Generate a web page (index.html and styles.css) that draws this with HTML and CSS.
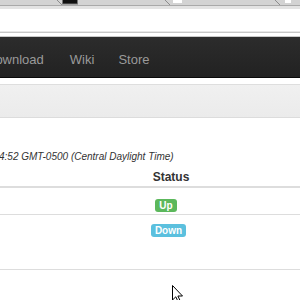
FILE: index.html
```html
<!DOCTYPE html>
<html lang="en">
  <head>
    <meta charset="UTF-8" />
    <meta name="viewport" content="width=device-width, initial-scale=1.0" />
    <title>Server Status</title>
    <link rel="stylesheet" href="styles.css">
  </head>
  <body>
    <!-- browser chrome -->
    <div class="tabstrip">
      <svg width="300" height="5" viewBox="0 0 300 5">
        <path d="M57 0 L62 5 M165 0 L170 5 M275 0 L280 5" stroke="#8c8c8c" stroke-width="1" fill="none" />
        <rect x="62.5" y="-1" width="15" height="5" fill="#111" stroke="#777" />
        <rect x="173" y="0" width="9" height="3" fill="#fff" />
        <rect x="285" y="0" width="6" height="3" fill="#fff" />
      </svg>
    </div>
    <div class="toolbar">
      <div class="omnibox"></div>
    </div>

    <!-- site navigation -->
    <nav class="navbar">
      <a href="#">Download</a>
      <a href="#" class="nav-wiki">Wiki</a>
      <a href="#" class="nav-store">Store</a>
    </nav>
    <div class="subbar"></div>

    <main class="content">
      <p class="updated">4:52 GMT-0500 (Central Daylight Time)</p>
      <table class="status-table">
        <colgroup>
          <col class="col-name" />
          <col class="col-status" />
          <col class="col-rest" />
        </colgroup>
        <thead>
          <tr>
            <th></th>
            <th class="cell-status">Status</th>
            <th></th>
          </tr>
        </thead>
        <tbody>
          <tr class="row-up">
            <td></td>
            <td class="cell-status"><span class="label label-up">Up</span></td>
            <td></td>
          </tr>
          <tr class="row-down">
            <td></td>
            <td class="cell-status"><span class="label label-down">Down</span></td>
            <td></td>
          </tr>
        </tbody>
      </table>
    </main>

    <svg class="cursor" width="13" height="20" viewBox="0 0 13 20">
      <path d="M1.5 1.5 L1.5 16 L4.8 12.8 L7.5 18.5 L9.5 17.5 L6.9 12 L11.5 12 Z" fill="#fff" stroke="#000" stroke-width="1" stroke-linejoin="miter" />
    </svg>
  </body>
</html>
```

FILE: styles.css
```css
html,
body {
  margin: 0;
  height: 300px;
  overflow: hidden;
}

body {
  background: #fff;
  font-family: "Liberation Sans", Arial, sans-serif;
  color: #333;
  position: relative;
}

.tabstrip {
  height: 5px;
  background: #d3d3d3;
  border-bottom: 1px solid #a9a9a9;
}

.tabstrip svg {
  display: block;
}

.toolbar {
  background: #e3e3e3;
  padding: 3px 0 0;
  border-bottom: 1px solid #c6c6c6;
}

.omnibox {
  height: 22px;
  background: #fff;
  border-bottom: 1px solid #e8e8e8;
}

.navbar {
  margin-top: 3px;
  border-top: 1px solid #c9c9c9;
  height: 42px;
  background: linear-gradient(#2c2c2c, #222);
  border-bottom: 1px solid #0a0a0a;
  display: flex;
  align-items: center;
  gap: 25px;
  margin-left: -14px;
  padding-top: 5px;
  box-sizing: border-box;
}

.navbar a {
  font-size: 13px;
  color: #9a9a9a;
  text-decoration: none;
}

.navbar .nav-wiki {
  margin-left: 1px;
}

.navbar .nav-store {
  margin-left: -1px;
}

.subbar {
  margin-top: 6px;
  height: 32px;
  background: linear-gradient(#f0f0f0, #ebebeb);
  border-top: 1px solid #dedede;
  border-bottom: 1px solid #dcdcdc;
}

.updated {
  margin: 32px 0 0 -1px;
  font-size: 10px;
  font-style: italic;
  line-height: 14px;
  color: #333;
}

.status-table {
  border-collapse: collapse;
  table-layout: fixed;
  width: 500px;
  margin-left: -132px;
}

.col-name {
  width: 270px;
}

.col-status {
  width: 60px;
}

.status-table th,
.status-table td {
  padding: 0;
  vertical-align: top;
  box-sizing: border-box;
}

.status-table th {
  font-size: 12px;
  font-weight: bold;
  height: 23px;
  padding-top: 6px;
  border-bottom: 2px solid #dddddd;
}

.cell-status {
  text-align: center;
}

.status-table th.cell-status {
  padding-left: 6px;
}

.row-up td {
  height: 27px;
  padding-top: 7px;
  border-bottom: 1px solid #dddddd;
}

.row-down td {
  height: 55px;
  padding-top: 5px;
  border-bottom: 1px solid #dddddd;
}

.label {
  display: inline-block;
  font-size: 10px;
  font-weight: bold;
  line-height: 10px;
  color: #fff;
  padding: 2px 4px 1px;
  border-radius: 3px;
}

.label-up {
  background: #5cb85c;
  margin-right: 4px;
}

.label-down {
  background: #5bc0de;
  margin-left: 1px;
}

.cursor {
  position: absolute;
  left: 171px;
  top: 284px;
}
```
